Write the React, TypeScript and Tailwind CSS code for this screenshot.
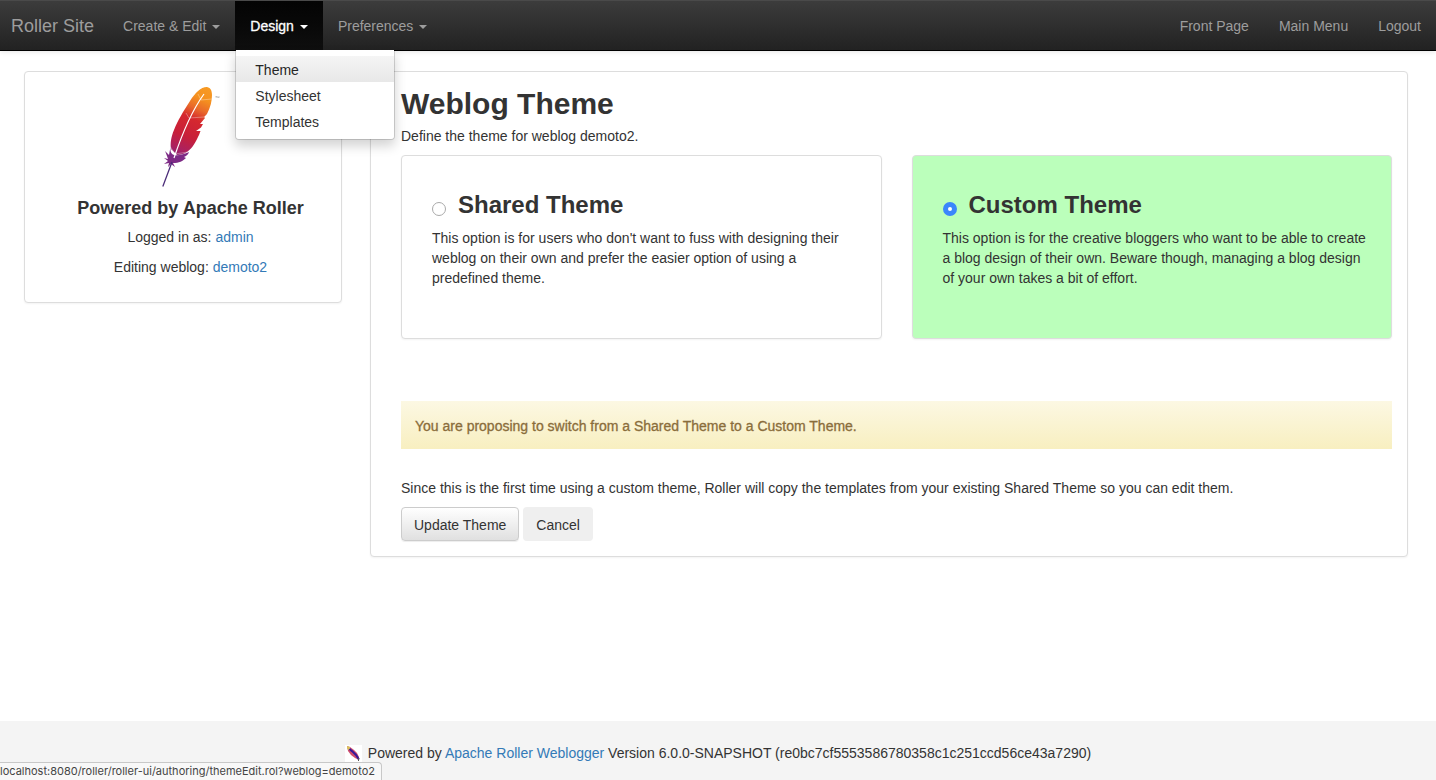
import { useState, type ReactNode } from 'react';

function Caret() {
  return (
    <span
      aria-hidden="true"
      className="ml-1.5 inline-block border-x-4 border-t-4 border-x-transparent border-t-current align-middle"
    />
  );
}

function FeatherLogo() {
  return (
    <svg viewBox="0 0 60 101" className="h-[101px] w-[60px]" role="img" aria-label="Apache feather">
      <defs>
        <linearGradient id="feather" gradientUnits="userSpaceOnUse" x1="46" y1="0" x2="14" y2="72">
          <stop offset="0" stopColor="#f79a23" />
          <stop offset="0.16" stopColor="#f5911f" />
          <stop offset="0.3" stopColor="#e96a2a" />
          <stop offset="0.44" stopColor="#d5282f" />
          <stop offset="0.68" stopColor="#c71f3a" />
          <stop offset="0.86" stopColor="#ab2160" />
          <stop offset="1" stopColor="#7d2680" />
        </linearGradient>
      </defs>
      <path
        fill="url(#feather)"
        d="M45.700 0C49 .3 51 3 51 8C51 14 49.500 20 46 27L43 30L44 31L39 37L42 37L40 40.500L35 44L39.500 44L38 48C35 54 32 61 26 65C23 67 20 68 16 68L10 62C9 57 10 50 13 43C17 33 22 25 29 14C34 6 40 0 45.700 0Z"
      />
      <path
        fill="#7d2a85"
        d="M9.500 60C9 64 10 67 13 68C18 69 23 67 28 65C27 68 25 69 23 70L25 71C22 74 18 76 12 76L14 80L10 77L7 80L8 76L3 77L7 74L3 71L7 72C6 69 5 66 4 64L8 68Z"
      />
      <path d="M43 7C35 18 24 38 13 71" fill="none" stroke="#fff" strokeWidth="1.2" />
      <path
        d="M37 7L40 13M40 13L51 12M25 26L28 31M28 31L43 30M9.500 60L14 67L27 65"
        fill="none"
        stroke="#fff"
        strokeOpacity="0.45"
        strokeWidth="0.7"
      />
      <path d="M11 75L1.800 99.500" fill="none" stroke="#4a2b78" strokeWidth="1.3" />
      <path
        d="M54.500 9.500H56M55.200 9.500V11M56.700 11V9.500L57.400 10.500L58 9.500V11"
        fill="none"
        stroke="#999"
        strokeWidth="0.5"
      />
    </svg>
  );
}

function FeatherIcon() {
  return (
    <svg viewBox="0 0 17 17" className="size-[17px] bg-white" aria-hidden="true">
      <path d="M2 1L5 2L9 5L12 8L14 12L14 15L10 13L6 10L3 6Z" fill="#d04c6c" />
      <path d="M2 1L5 2L5 4L3 5L2 3Z" fill="#d9c05a" />
      <path d="M4.500 4L8 7L11 10L14 14.500" fill="none" stroke="#35189a" strokeWidth="2" />
      <path d="M13.500 13V16" stroke="#555" />
    </svg>
  );
}

function NavLink({ children }: { children: ReactNode }) {
  return (
    <a href="#" className="block px-[15px] py-[15px] hover:text-white">
      {children}
    </a>
  );
}

const designItems = ['Theme', 'Stylesheet', 'Templates'];

function Navbar() {
  return (
    <nav className="relative z-10 flex h-[51px] border-t border-b border-t-[#4a4a4a] border-b-black bg-linear-to-b from-[#3c3c3c] to-[#222] text-[#9d9d9d] shadow-[0_1px_5px_rgba(0,0,0,0.1)]">
      <a href="#" className="py-[15px] pr-3.5 pl-[11px] text-lg leading-5">
        Roller Site
      </a>
      <ul className="flex">
        <li>
          <NavLink>
            Create &amp; Edit
            <Caret />
          </NavLink>
        </li>
        <li className="relative">
          <a
            href="#"
            aria-expanded="true"
            className="block h-[50px] bg-linear-to-b from-[#040404] to-[#0f0f0f] px-[15px] py-[15px] text-white [-webkit-text-stroke:0.3px_white]"
          >
            Design
            <Caret />
          </a>
          <ul className="absolute top-[49px] left-0 w-40 rounded-b border border-t-0 border-black/15 bg-white bg-clip-padding pt-1.5 pb-[5px] text-[#333] shadow-[0_6px_12px_rgba(0,0,0,0.175)]">
            {designItems.map((item, index) => (
              <li key={item}>
                <a
                  href="#"
                  className={
                    index === 0
                      ? 'block bg-linear-to-b from-[#f5f5f5] to-[#e8e8e8] px-[19px] pt-1 pb-0.5 text-[#262626]'
                      : 'block px-[19px] pt-1 pb-0.5'
                  }
                >
                  {item}
                </a>
              </li>
            ))}
          </ul>
        </li>
        <li>
          <NavLink>
            Preferences
            <Caret />
          </NavLink>
        </li>
      </ul>
      <ul className="ml-auto flex">
        {['Front Page', 'Main Menu', 'Logout'].map((item) => (
          <li key={item}>
            <NavLink>{item}</NavLink>
          </li>
        ))}
      </ul>
    </nav>
  );
}

interface ThemeOptionProps {
  id: string;
  title: string;
  selected: boolean;
  onSelect: () => void;
  children: ReactNode;
}

function ThemeOption({ id, title, selected, onSelect, children }: ThemeOptionProps) {
  return (
    <div
      className={
        selected
          ? 'min-h-[184px] rounded border border-[#ddd] bg-[#bfb] pt-9 pr-[15px] pb-[15px] pl-[30px] shadow-[0_1px_2px_rgba(0,0,0,0.05)]'
          : 'min-h-[184px] rounded border border-[#ddd] bg-white pt-9 pr-[15px] pb-[15px] pl-[30px] shadow-[0_1px_2px_rgba(0,0,0,0.05)]'
      }
    >
      <h3 className="mb-2.5 flex items-center text-2xl leading-[26px] font-bold">
        <input
          id={id}
          type="radio"
          name="themeType"
          checked={selected}
          onChange={onSelect}
          className="mt-2 mr-3 size-3.5 shrink-0 appearance-none rounded-full border border-[#aaa] bg-white checked:border-5 checked:border-[#3b86fb]"
        />
        <label htmlFor={id}>{title}</label>
      </h3>
      <p>{children}</p>
    </div>
  );
}

const panel =
  'rounded border border-[#ddd] bg-white pt-[15px] pr-[15px] pb-[15px] pl-[30px] shadow-[0_1px_2px_rgba(0,0,0,0.05)]';
const button = 'h-[34px] rounded border px-3 pt-0.5 text-sm text-[#333]';

export default function App() {
  const [theme, setTheme] = useState('custom');

  return (
    <div className="flex min-h-screen flex-col bg-white font-['Liberation_Sans',Arial,sans-serif] text-sm leading-5 text-[#333]">
      <Navbar />
      <div className="grid grid-cols-[318fr_1038fr] items-start gap-7 pt-5 pr-7 pl-6">
        <aside className={panel}>
          <div className="flex flex-col items-center text-center">
            <FeatherLogo />
            <h4 className="mt-2.5 mb-[9px] text-lg leading-5 font-bold">Powered by Apache Roller</h4>
            <p className="mb-2.5">
              Logged in as: <a href="#" className="text-[#337ab7]">admin</a>
            </p>
            <p className="mb-2.5">
              Editing weblog: <a href="#" className="text-[#337ab7]">demoto2</a>
            </p>
          </div>
        </aside>
        <main className={panel}>
          <h2 className="mb-1.5 text-3xl leading-[33px] font-bold">Weblog Theme</h2>
          <p className="mb-[9px]">Define the theme for weblog demoto2.</p>
          <form onSubmit={(event) => event.preventDefault()}>
            <div className="grid grid-cols-2 gap-[30px]">
              <ThemeOption
                id="shared-theme"
                title="Shared Theme"
                selected={theme === 'shared'}
                onSelect={() => setTheme('shared')}
              >
                This option is for users who don't want to fuss with designing their weblog on their own and
                prefer the easier option of using a predefined theme.
              </ThemeOption>
              <ThemeOption
                id="custom-theme"
                title="Custom Theme"
                selected={theme === 'custom'}
                onSelect={() => setTheme('custom')}
              >
                This option is for the creative bloggers who want to be able to create a blog design of their
                own. Beware though, managing a blog design of your own takes a bit of effort.
              </ThemeOption>
            </div>
            <div
              role="status"
              className="mt-[62px] bg-linear-to-b from-[#fcf8e3] to-[#f8efc0] px-3.5 pt-[15px] pb-[13px] text-[#8a6d3b] [-webkit-text-stroke:0.3px_#8a6d3b]"
            >
              You are proposing to switch from a Shared Theme to a Custom Theme.
            </div>
            <p className="mt-[29px] mb-[9px]">
              Since this is the first time using a custom theme, Roller will copy the templates from your
              existing Shared Theme so you can edit them.
            </p>
            <div className="flex gap-1">
              <button
                type="submit"
                className={`${button} border-[#ccc] bg-linear-to-b from-white to-[#e0e0e0] shadow-[0_1px_1px_rgba(0,0,0,0.075)]`}
              >
                Update Theme
              </button>
              <button type="button" className={`${button} border-transparent bg-[#efefef]`}>
                Cancel
              </button>
            </div>
          </form>
        </main>
      </div>
      <footer className="mt-auto flex items-center justify-center gap-1.5 bg-[#f4f4f4] pt-[22px] pb-[17px]">
        <FeatherIcon />
        <p>
          Powered by{' '}
          <a href="#" className="text-[#337ab7]">
            Apache Roller Weblogger
          </a>{' '}
          Version 6.0.0-SNAPSHOT (re0bc7cf5553586780358c1c251ccd56ce43a7290)
        </p>
      </footer>
      <div className="fixed bottom-0 left-0 rounded-tr border-t border-r border-[#c8c8c8] bg-[#f8f8f8] pr-1.5 font-['Inter',sans-serif] text-[11px] leading-[17px] text-[#444]">
        localhost:8080/roller/roller-ui/authoring/themeEdit.rol?weblog=demoto2
      </div>
    </div>
  );
}
